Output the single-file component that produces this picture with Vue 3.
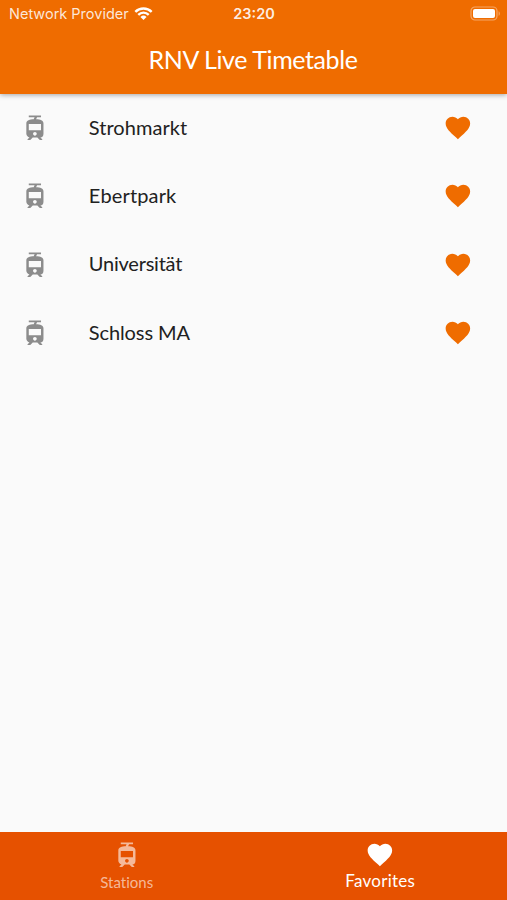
<template>
  <div class="app">
    <header class="top">
      <div class="status">
        <div class="carrier">
          <span>Network Provider</span>
          <svg class="wifi" viewBox="0 0 20 14">
            <path d="M1.4 5.1a12.2 12.2 0 0 1 17.2 0M4.5 8.2a7.8 7.8 0 0 1 11 0" />
            <path class="dot" d="M10 13.6l-3.2-3.2a4.6 4.6 0 0 1 6.4 0z" />
          </svg>
        </div>
        <span class="time">23:20</span>
        <svg class="battery" viewBox="0 0 32 15">
          <rect class="case" x="1" y="1" width="26" height="13" rx="4" />
          <rect x="3" y="3" width="22" height="9" rx="2" />
          <path class="cap" d="M28.6 5.2c1.6.6 1.6 4 0 4.6z" />
        </svg>
      </div>
      <h1 class="title">RNV Live Timetable</h1>
    </header>

    <ul class="list">
      <li v-for="station in stations" :key="station.name" class="row">
        <svg class="icon tram" viewBox="0 0 24 24"><path :d="tramPath" /></svg>
        <span class="name" :style="{ letterSpacing: station.spacing }">{{ station.name }}</span>
        <button class="fav-btn" aria-label="Favorite" @click="toggle(station)">
          <svg class="icon" :class="{ off: !station.favorite }" viewBox="0 0 24 24">
            <path :d="heartPath" />
          </svg>
        </button>
      </li>
    </ul>

    <nav class="tabs">
      <button
        v-for="tab in tabs"
        :key="tab.id"
        class="tab"
        :class="{ active: current === tab.id }"
        @click="current = tab.id"
      >
        <svg class="icon" viewBox="0 0 24 24"><path :d="tab.icon" /></svg>
        <span>{{ tab.label }}</span>
      </button>
    </nav>
  </div>
</template>

<script setup>
import { ref } from 'vue'

const tramPath =
  'M19 16.94V8.5c0-2.79-2.61-3.4-6.01-3.49l.76-1.51H17V2H7v1.5h4.75l-.76 1.52C7.86 5.11 5 5.73 5 8.5v8.44c0 1.45 1.19 2.66 2.59 2.97L6 21.5v.5h2.23l2-2H14l2 2h2v-.5L16.5 20h-.08c1.69 0 2.58-1.37 2.58-3.06zm-7 1.56c-.83 0-1.5-.67-1.5-1.5s.67-1.5 1.5-1.5 1.5.67 1.5 1.5-.67 1.5-1.5 1.5zm5-4.5H7V9h10v5z'
const heartPath =
  'M12 21.35l-1.45-1.32C5.4 15.36 2 12.28 2 8.5 2 5.42 4.42 3 7.5 3c1.74 0 3.41.81 4.5 2.09C13.09 3.81 14.76 3 16.5 3 19.58 3 22 5.42 22 8.5c0 3.78-3.4 6.86-8.55 11.54L12 21.35z'

const stations = ref([
  { name: 'Strohmarkt', favorite: true, spacing: '0.05px' },
  { name: 'Ebertpark', favorite: true, spacing: '0.15px' },
  { name: 'Universität', favorite: true, spacing: '-0.22px' },
  { name: 'Schloss MA', favorite: true, spacing: '-0.1px' },
])

const tabs = [
  { id: 'stations', label: 'Stations', icon: tramPath },
  { id: 'favorites', label: 'Favorites', icon: heartPath },
]
const current = ref('favorites')

function toggle(station) {
  station.favorite = !station.favorite
}
</script>

<style>
body {
  margin: 0;
}
</style>

<style scoped>
.app {
  display: flex;
  flex-direction: column;
  height: 900px;
  background: #fafafa;
  font-family: Lato, 'Liberation Sans', sans-serif;
}

.top {
  z-index: 1;
  height: 94px;
  background: #ef6c00;
  color: #fff;
  box-shadow: 0 1px 5px rgba(0, 0, 0, 0.35);
}

.status {
  display: grid;
  grid-template-columns: 1fr auto 1fr;
  align-items: center;
  box-sizing: border-box;
  height: 27px;
  padding: 0 6px 0 9px;
  font-family: Inter, sans-serif;
  font-size: 14.5px;
}

.carrier {
  display: flex;
  align-items: center;
  gap: 5px;
  color: rgba(255, 255, 255, 0.85);
}

.wifi {
  width: 19px;
  height: 13.3px;
  fill: none;
  stroke: #fff;
  stroke-width: 2.5;
}

.wifi .dot {
  fill: #fff;
  stroke: none;
}

.time {
  margin-right: 2px;
  font-weight: 600;
  color: rgba(255, 255, 255, 0.9);
}

.battery {
  justify-self: end;
  width: 32px;
  height: 15px;
  margin-right: -1px;
  fill: #fff;
}

.battery .case {
  fill: none;
  stroke: rgba(255, 255, 255, 0.4);
  stroke-width: 1.2;
}

.battery .cap {
  fill: rgba(255, 255, 255, 0.4);
}

.title {
  margin: 0 1px 0 0;
  text-align: center;
  font-size: 25px;
  font-weight: 400;
  letter-spacing: -0.4px;
  line-height: 64px;
}

.list {
  flex: 1;
  margin: 0;
  padding: 0;
  list-style: none;
}

.row {
  display: flex;
  align-items: center;
  box-sizing: border-box;
  height: 68.4px;
  padding: 0 34px 1px 20.3px;
}

.icon {
  display: block;
  width: 29.8px;
  height: 29.4px;
  fill: currentColor;
}

.tram {
  color: #8c8c8c;
}

.name {
  flex: 1;
  margin-left: 38.7px;
  padding-bottom: 2px;
  color: #212121;
  font-size: 20px;
}

.fav-btn {
  padding: 0;
  border: none;
  background: none;
  color: #ef6c00;
  cursor: pointer;
}

.off {
  color: #bdbdbd;
}

.tabs {
  display: flex;
  height: 68.5px;
  background: #e65100;
}

.tab {
  display: flex;
  flex: 1;
  flex-direction: column;
  align-items: center;
  padding: 8.5px 0 0;
  border: none;
  background: none;
  color: rgba(255, 255, 255, 0.6);
  font-family: inherit;
  font-size: 15px;
  font-variant-ligatures: none;
  line-height: 26px;
  cursor: pointer;
}

.tab.active {
  color: #fff;
  font-size: 17px;
  letter-spacing: 0.25px;
  line-height: 24px;
}
</style>
